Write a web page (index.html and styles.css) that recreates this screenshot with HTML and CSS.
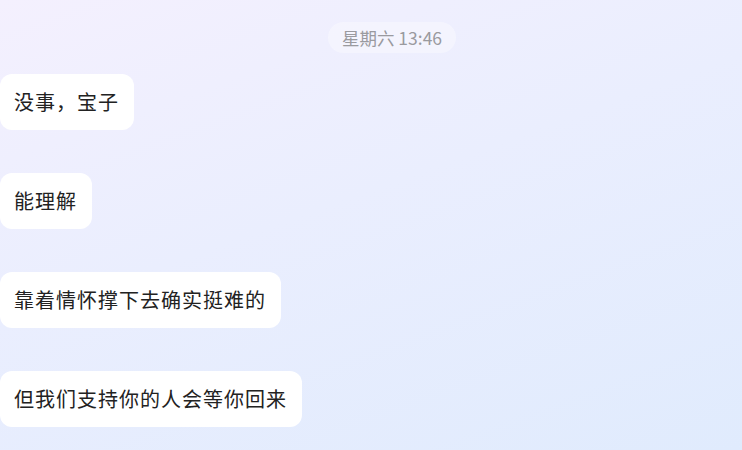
FILE: index.html
```html
<!DOCTYPE html>
<html lang="zh-CN">
<head>
<meta charset="utf-8">
<link rel="stylesheet" href="styles.css">
</head>
<body>
<div class="chat">
  <div class="time-row"><span class="time">星期六 13:46</span></div>
  <div class="msg"><div class="bubble">没事，宝子</div></div>
  <div class="msg"><div class="bubble">能理解</div></div>
  <div class="msg"><div class="bubble">靠着情怀撑下去确实挺难的</div></div>
  <div class="msg"><div class="bubble">但我们支持你的人会等你回来</div></div>
</div>
</body>
</html>
```
FILE: styles.css
```css
html, body {
  margin: 0;
  height: 100%;
}
body {
  background: linear-gradient(160deg, #f4f0fe 0%, #eaeefe 45%, #e0ebfd 100%);
  font-family: "Noto Sans CJK SC", "Noto Sans", sans-serif;
  overflow: hidden;
}
.chat {
  display: flex;
  flex-direction: column;
  gap: 43px;
  padding-top: 22px;
}
.time-row {
  display: flex;
  justify-content: center;
  padding-left: 42px;
  margin-bottom: -22px;
}
.time {
  display: inline-block;
  height: 31px;
  line-height: 31px;
  padding: 0 14px;
  border-radius: 16px;
  background: rgba(255, 255, 255, 0.35);
  color: #9a9a9f;
  font-size: 17.5px;
}
.msg {
  display: flex;
}
.bubble {
  background: #ffffff;
  border-radius: 12px;
  height: 56px;
  line-height: 56px;
  padding: 0 15px 0 14px;
  font-size: 20px;
  letter-spacing: 1px;
  color: #222222;
  white-space: nowrap;
}
```
